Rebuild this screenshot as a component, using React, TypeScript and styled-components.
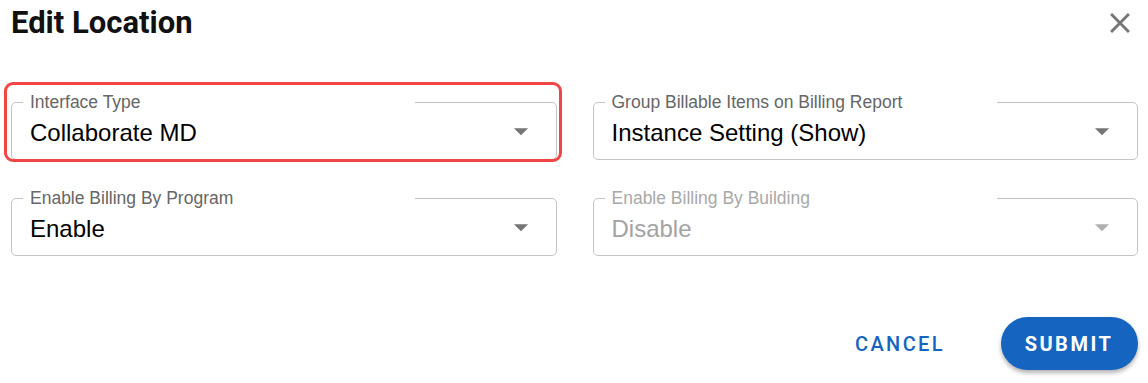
import styled, { createGlobalStyle } from 'styled-components';

const GlobalStyle = createGlobalStyle`
  * { box-sizing: border-box; }
  body {
    margin: 0;
    background: #fff;
    font-family: Roboto, "Liberation Sans", Arial, sans-serif;
  }
`;

const Dialog = styled.div`
  width: 1148px;
  height: 383px;
  padding: 5px 10px 0 11px;
  display: flex;
  flex-direction: column;
`;

const Header = styled.div`
  display: flex;
  align-items: center;
  justify-content: space-between;
`;

const Title = styled.h2`
  margin: 0;
  font-size: 31px;
  line-height: 36px;
  font-weight: 700;
  color: #111;
`;

const CloseButton = styled.button`
  border: 0;
  background: none;
  padding: 0;
  margin-right: 1px;
  display: flex;
  color: #757575;
  cursor: pointer;
`;

const Grid = styled.div`
  display: grid;
  grid-template-columns: 1fr 1fr;
  column-gap: 36px;
  row-gap: 29px;
  margin-top: 52px;
`;

const FieldWrap = styled.div`
  position: relative;
`;

const Highlight = styled.div`
  position: absolute;
  top: -11px;
  left: -7px;
  right: -5px;
  bottom: -2px;
  border: 3px solid #f24646;
  border-radius: 9px;
  pointer-events: none;
`;

const Outline = styled.fieldset`
  margin: 0;
  padding: 0 0 0 18px;
  height: 67px;
  border: 1px solid #c4c4c4;
  border-radius: 5px;
  display: flex;
  align-items: center;
  justify-content: space-between;
  min-width: 0;
`;

const Legend = styled.legend<{ $disabled?: boolean }>`
  width: 392px;
  margin-left: -7px;
  padding: 0 7px;
  font-family: "Liberation Sans", Arial, sans-serif;
  font-size: 17.5px;
  line-height: 19px;
  color: ${p => (p.$disabled ? '#a8a8a8' : '#666')};
  white-space: nowrap;
`;

const Value = styled.span<{ $disabled?: boolean }>`
  font-family: "Liberation Sans", Arial, sans-serif;
  font-size: 24px;
  margin-top: -6px;
  color: ${p => (p.$disabled ? '#a3a3a3' : '#000')};
`;

const Arrow = styled.svg<{ $disabled?: boolean }>`
  width: 34px;
  height: 34px;
  margin-right: 18px;
  margin-top: -10px;
  fill: ${p => (p.$disabled ? '#b0b0b0' : '#757575')};
`;

const Actions = styled.div`
  display: flex;
  justify-content: flex-end;
  align-items: center;
  gap: 56px;
  margin-top: 61px;
`;

const TextButton = styled.button`
  border: 0;
  background: none;
  font-family: Roboto, sans-serif;
  font-size: 20px;
  font-weight: 500;
  letter-spacing: 2.4px;
  color: #1565c0;
  padding: 0;
  cursor: pointer;
`;

const PillButton = styled.button`
  border: 0;
  width: 137px;
  height: 53px;
  border-radius: 27px;
  background: #1565c0;
  color: #fff;
  font-family: Roboto, sans-serif;
  font-size: 20px;
  font-weight: 700;
  letter-spacing: 2.5px;
  padding-left: 5px;
  box-shadow: 0 3px 4px rgba(0, 0, 0, 0.3);
  cursor: pointer;
`;

type FieldProps = {
  label: string;
  value: string;
  disabled?: boolean;
  highlighted?: boolean;
};

const SelectField = ({ label, value, disabled, highlighted }: FieldProps) => (
  <FieldWrap>
    <Outline>
      <Legend $disabled={disabled}>{label}</Legend>
      <Value $disabled={disabled}>{value}</Value>
      <Arrow viewBox='0 0 24 24' $disabled={disabled}>
        <path d='M7 10l5 5 5-5z' />
      </Arrow>
    </Outline>
    {highlighted && <Highlight />}
  </FieldWrap>
);

const App = () => (
  <>
    <GlobalStyle />
    <Dialog>
      <Header>
        <Title>Edit Location</Title>
        <CloseButton aria-label='close'>
          <svg width='34' height='34' viewBox='0 0 24 24' fill='currentColor'>
            <path d='M19 6.41 17.59 5 12 10.59 6.41 5 5 6.41 10.59 12 5 17.59 6.41 19 12 13.41 17.59 19 19 17.59 13.41 12z' />
          </svg>
        </CloseButton>
      </Header>
      <Grid>
        <SelectField label='Interface Type' value='Collaborate MD' highlighted />
        <SelectField
          label='Group Billable Items on Billing Report'
          value='Instance Setting (Show)'
        />
        <SelectField label='Enable Billing By Program' value='Enable' />
        <SelectField label='Enable Billing By Building' value='Disable' disabled />
      </Grid>
      <Actions>
        <TextButton>CANCEL</TextButton>
        <PillButton>SUBMIT</PillButton>
      </Actions>
    </Dialog>
  </>
);

export default App;
